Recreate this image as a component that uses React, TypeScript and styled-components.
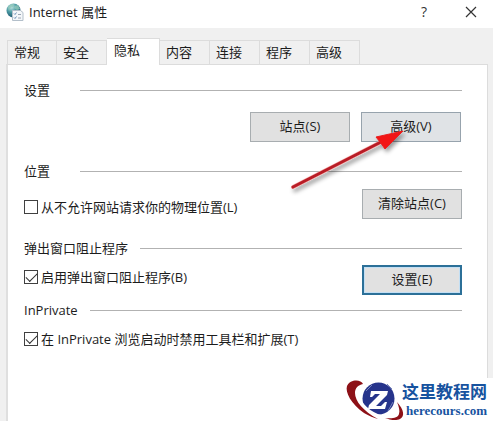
import React from 'react';
import styled, { createGlobalStyle, css } from 'styled-components';

const GlobalStyle = createGlobalStyle`
  * { box-sizing: border-box; }
  html, body, #root { height: 100%; }
  body {
    margin: 0;
    background: #f0f0f0;
    color: #1c1c1c;
    font: 13px/20px "Open Sans", "Noto Sans CJK SC", sans-serif;
  }
`;

const Dialog = styled.div`
  position: relative;
  display: flex;
  flex-direction: column;
  min-height: 100%;
  overflow: hidden;
`;

const TitleBar = styled.header`
  display: flex;
  align-items: center;
  height: 28px;
  padding: 0 14px 4px 6px;
  background: #fff;
`;

const Title = styled.h1`
  flex: 1;
  margin: 0 0 0 5px;
  font-size: 13px;
  font-weight: 400;
`;

const CaptionButton = styled.button`
  display: grid;
  place-items: center;
  width: 16px;
  height: 20px;
  margin-left: 31px;
  padding: 0;
  border: 0;
  background: none;
  color: #333;
  font: inherit;
  font-size: 14px;
`;

const Body = styled.main`
  display: flex;
  flex: 1;
  flex-direction: column;
  padding: 10px 5px 0 6px;
`;

const TabList = styled.div`
  display: flex;
  align-items: flex-end;
  height: 26px;
  padding-left: 1px;
`;

const Tab = styled.button<{ $active?: boolean }>`
  flex: none;
  width: 50px;
  height: 24px;
  padding: 0 0 2px 6px;
  border: 1px solid #dcdcdc;
  border-width: 1px 1px 0 0;
  background: #f0f0f0;
  color: inherit;
  font: inherit;
  text-align: left;
  &:first-child { border-left-width: 1px; }
  ${({ $active }) => $active && css`
    z-index: 1;
    width: 53px;
    height: 27px;
    margin-bottom: -1px;
    padding: 0 0 4px 7px;
    background: #fff;
  `}
`;

const Panel = styled.section`
  flex: 1;
  padding: 15px 25px 0 16px;
  border: 1px solid #dcdcdc;
  border-bottom: 0;
  border-left: 2px solid #dfdfdf;
  background: #fff;
`;

const Group = styled.fieldset<{ $space: number }>`
  min-width: 0;
  margin: 0 0 ${({ $space }) => $space}px;
  padding: 0;
  border: 0;
`;

const GroupHeader = styled.div<{ $gap: number }>`
  display: flex;
  align-items: center;
  gap: ${({ $gap }) => $gap}px;
  height: 20px;
  &::after {
    content: '';
    flex: 1;
    height: 1px;
    background: #b2b2b2;
  }
`;

const Row = styled.div<{ $align?: string; $top?: number }>`
  display: flex;
  align-items: ${({ $align }) => $align || 'center'};
  justify-content: space-between;
  margin-top: ${({ $top }) => $top ?? 8}px;
`;

const Actions = styled(Row)`
  justify-content: flex-end;
  gap: 11px;
  padding-right: 1px;
`;

const PushButton = styled.button<{ $tone?: 'hover' | 'focus' }>`
  flex: none;
  width: 100px;
  height: 30px;
  padding: 0 0 2px;
  border: 1px solid #a8adb0;
  background: #e1e1e1;
  color: inherit;
  font: inherit;
  ${({ $tone }) => $tone === 'hover' && css`
    border-color: #97a3ad;
    background: #e0e3e6;
  `}
  ${({ $tone }) => $tone === 'focus' && css`
    border: 2px solid #2c7098;
    box-shadow: inset 0 0 0 1px #c3dff4;
  `}
`;

const CheckLabel = styled.label`
  display: flex;
  align-items: center;
  gap: 3px;
  height: 24px;
  white-space: nowrap;
`;

const CheckBox = styled.input`
  display: grid;
  place-items: center;
  width: 14px;
  height: 14px;
  margin: 0;
  border: 1px solid #404040;
  background: #fff;
  appearance: none;
  &:checked::after {
    content: '';
    width: 10px;
    height: 5px;
    margin-bottom: 3px;
    border: solid #333;
    border-width: 0 0 1px 1px;
    transform: rotate(-45deg);
  }
`;

const Pointer = styled.svg`
  position: absolute;
  top: 122px;
  right: 78px;
  width: 130px;
  height: 74px;
  pointer-events: none;
`;

const Brand = styled.a`
  position: absolute;
  right: 0;
  bottom: 0;
  z-index: 2;
  display: flex;
  height: 43px;
  padding-right: 6px;
  background: #fff;
  color: #17539f;
  text-decoration: none;
  white-space: nowrap;
  svg { overflow: visible; }
`;

const BrandText = styled.span`
  display: flex;
  flex-direction: column;
  align-items: flex-end;
`;

const BrandName = styled.strong`
  font: 700 17px/25px "Noto Sans CJK SC", sans-serif;
`;

const BrandSite = styled.strong`
  font: 700 13px/15px "Liberation Serif", serif;
`;

function GlobeIcon() {
  return (
    <svg width="18" height="18" viewBox="0 0 18 18" aria-hidden="true">
      <defs>
        <radialGradient id="globe" cx="35%" cy="25%" r="80%">
          <stop offset="0" stopColor="#c5e6e5" />
          <stop offset=".45" stopColor="#4e9da5" />
          <stop offset="1" stopColor="#174f6b" />
        </radialGradient>
      </defs>
      <circle cx="7.5" cy="7.5" r="7" fill="url(#globe)" />
      <path d="M2 4c2-3 4-3 6-3l-1 3-3 1-1 3zM9 3l3-1 2 4-3 1-3-2z" fill="#8fc7b8" opacity=".8" />
      <path d="M6.500 7.500h8l2.500 2v8H6.500z" fill="#f4f7fa" stroke="#b3bfca" />
      <path d="M8 10.500l1 1 1.500-2M8 14.500l1 1 1.500-2" fill="none" stroke="#6d91b8" />
      <path d="M12 11.500h3M12 15h3" stroke="#9aa6b4" />
    </svg>
  );
}

function BrandMark() {
  return (
    <svg width="60" height="43" viewBox="0 0 60 43" aria-hidden="true">
      <ellipse cx="36.500" cy="20.500" rx="16" ry="16" fill="#26348b" />
      <path d="M16 17c2 9 10 18 24 22" fill="none" stroke="#fff" strokeWidth="3" />
      <path d="M21 6C19 1 8 1 5 8c-2 6 4 18 17 27 5 3 10 5 14 6C21 33 13 23 13 15c0-5 3-8 8-9z" fill="#8d1117" />
      <path d="M55 24c7 8 8 14 3 17-4 2-10 1-15-1 7 1 13 0 14-4 1-3 0-7-2-12z" fill="#8d1117" />
      <path d="M29 13h17l-1 4-11 11h5l4-4h2l-2 7H26l1-4 11-11h-5l-3 3h-2z" fill="#fff" />
      <path d="M24 13l6-6M45 6l5 5M51 24l-5 9" stroke="#7784bc" strokeWidth="1" />
    </svg>
  );
}

const tabs = ['常规', '安全', '隐私', '内容', '连接', '程序', '高级'];

function Check({ label, checked = false }: { label: string; checked?: boolean }) {
  return (
    <CheckLabel>
      <CheckBox type="checkbox" defaultChecked={checked} />
      {label}
    </CheckLabel>
  );
}

export default function App() {
  return (
    <>
      <GlobalStyle />
      <Dialog role="dialog" aria-labelledby="title">
        <TitleBar>
          <GlobeIcon />
          <Title id="title">Internet 属性</Title>
          <CaptionButton type="button" aria-label="帮助">?</CaptionButton>
          <CaptionButton type="button" aria-label="关闭">
            <svg width="12" height="12" viewBox="0 0 12 12">
              <path d="M1 1l10 10M11 1L1 11" stroke="currentColor" strokeWidth="1.200" />
            </svg>
          </CaptionButton>
        </TitleBar>
        <Body>
          <TabList role="tablist">
            {tabs.map((name) => (
              <Tab key={name} type="button" role="tab" aria-selected={name === '隐私'} $active={name === '隐私'}>
                {name}
              </Tab>
            ))}
          </TabList>
          <Panel role="tabpanel" aria-label="隐私">
            <Group $space={19} aria-label="设置">
              <GroupHeader $gap={30}>设置</GroupHeader>
              <Actions $top={12}>
                <PushButton type="button">站点(S)</PushButton>
                <PushButton type="button" $tone="hover">高级(V)</PushButton>
              </Actions>
            </Group>
            <Group $space={19} aria-label="位置">
              <GroupHeader $gap={30}>位置</GroupHeader>
              <Row $align="flex-end">
                <Check label="从不允许网站请求你的物理位置(L)" />
                <PushButton type="button">清除站点(C)</PushButton>
              </Row>
            </Group>
            <Group $space={5} aria-label="弹出窗口阻止程序">
              <GroupHeader $gap={12}>弹出窗口阻止程序</GroupHeader>
              <Row $align="flex-start" $top={7}>
                <Check label="启用弹出窗口阻止程序(B)" checked />
                <PushButton type="button" $tone="focus">设置(E)</PushButton>
              </Row>
            </Group>
            <Group $space={0} aria-label="InPrivate">
              <GroupHeader $gap={12}>InPrivate</GroupHeader>
              <Row $top={7}>
                <Check label="在 InPrivate 浏览启动时禁用工具栏和扩展(T)" checked />
              </Row>
            </Group>
          </Panel>
        </Body>
        <Pointer viewBox="0 0 130 74" aria-hidden="true">
          <defs>
            <filter id="shade" x="-10%" y="-10%" width="125%" height="135%">
              <feDropShadow dx="2" dy="3" stdDeviation="2" floodColor="#000" floodOpacity=".4" />
            </filter>
          </defs>
          <g filter="url(#shade)">
            <path d="M8 65L96 20" stroke="#f5a3a3" strokeWidth="4" strokeLinecap="round" />
            <path d="M8 65L96 20" stroke="#b81d25" strokeWidth="3" strokeLinecap="round" />
            <path d="M118 9L91 15l4 5 5 7z" fill="#f21212" stroke="#e92020" />
          </g>
        </Pointer>
        <Brand href="#">
          <BrandMark />
          <BrandText>
            <BrandName>这里教程网</BrandName>
            <BrandSite>herecours.com</BrandSite>
          </BrandText>
        </Brand>
      </Dialog>
    </>
  );
}
